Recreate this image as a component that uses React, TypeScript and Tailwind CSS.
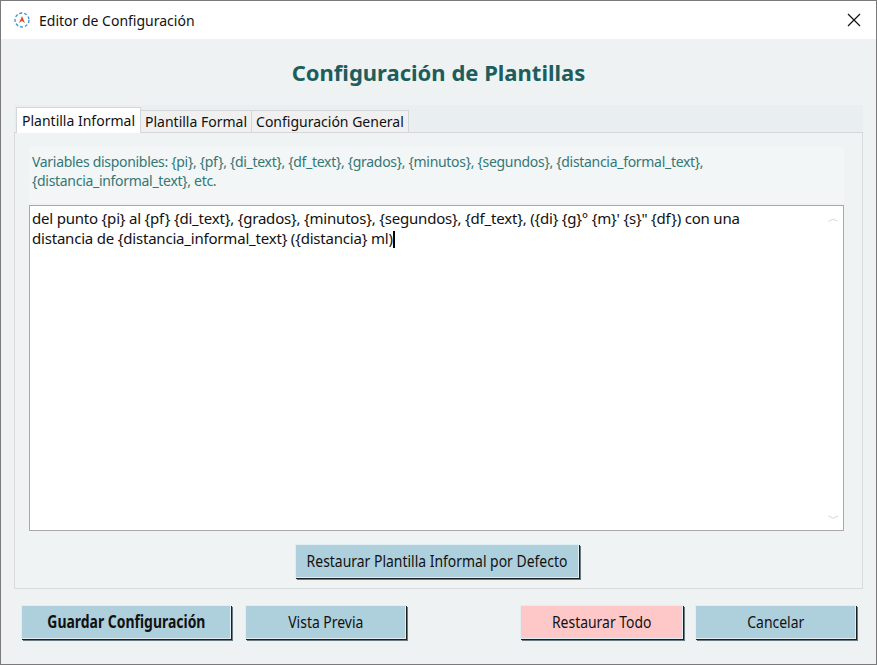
import React from "react";

const btn = "h-[34px] bg-[#aecfdc] border border-[#e0eef3] shadow-[1px_1px_0_#1f1f1f,2px_2px_0_#6b7b80] text-[#111] text-[17px] font-['Liberation_Sans',Arial,sans-serif] flex items-center justify-center whitespace-nowrap";
const narrow = "inline-block scale-x-[0.82]";

export default function App() {
  return (
    <div className="w-[877px] h-[665px] border border-[#7a7a7a] bg-[#eef2f3] flex flex-col font-['Liberation_Sans',Arial,sans-serif] overflow-hidden">
      <div className="h-[38px] bg-white flex items-center shrink-0">
        <svg width="20" height="20" viewBox="0 0 20 20" className="ml-[11px] mr-[7px]">
          <circle cx="10" cy="10" r="7" fill="none" stroke="#3a8fd0" strokeWidth="1.3" strokeDasharray="3 2" />
          <path d="M10 6 L13 13 L10 11 L7 13 Z" fill="#d9532c" />
        </svg>
        <span className="text-[14px] text-[#111] font-['Noto_Sans',sans-serif]">Editor de Configuración</span>
        <svg width="14" height="14" viewBox="0 0 14 14" className="ml-auto mr-[15px]">
          <path d="M1 1 L13 13 M13 1 L1 13" stroke="#111" strokeWidth="1.2" />
        </svg>
      </div>
      <div className="h-[66px] flex items-center justify-center shrink-0">
        <h1 className="text-[22px] font-bold text-[#1d5d5c] mt-[1px] font-['Liberation_Sans',Arial,sans-serif]">Configuración de Plantillas</h1>
      </div>
      <div className="mx-[13px] bg-[#e9eef0] flex flex-col h-[484px]">
        <div className="flex items-end h-[28px] pl-[2px] text-[14px] text-[#111] font-['Noto_Sans',sans-serif] border-b border-[#d3d7d9]">
          <div className="h-[26px] px-[5px] bg-white border border-b-0 border-[#d3d7d9] flex items-center -mb-px">Plantilla Informal</div>
          <div className="h-[22px] px-[4px] bg-[#f0f0f0] border border-b-0 border-l-0 border-[#d3d7d9] flex items-center">Plantilla Formal</div>
          <div className="h-[22px] px-[4px] bg-[#f0f0f0] border border-b-0 border-l-0 border-[#d3d7d9] flex items-center">Configuración General</div>
        </div>
        <div className="flex-1 bg-[#eff3f4] border border-t-0 border-[#d8dcdd] pl-[14px] pr-[18px] pt-[14px] flex flex-col">
          <div className="bg-[#f2f6f7] h-[56px] pl-[3px] pt-[5px] text-[14px] leading-[19px] text-[#347775] tracking-[-0.3px]">
            Variables disponibles: {"{pi}, {pf}, {di_text}, {df_text}, {grados}, {minutos}, {segundos}, {distancia_formal_text},"}<br />
            {"{distancia_informal_text}, etc."}
          </div>
          <div className="mt-[2px] h-[326px] bg-white border border-[#a9a9a9] flex">
            <div className="flex-1 px-[2px] pt-[2px] text-[15px] leading-[20px] text-[#111] tracking-[-0.2px]">
              {"del punto {pi} al {pf} {di_text}, {grados}, {minutos}, {segundos}, {df_text}, ({di} {g}° {m}' {s}\" {df}) con una"}<br />
              {"distancia de {distancia_informal_text} ({distancia} ml)"}<span className="inline-block w-[2px] h-[17px] bg-black align-middle" />
            </div>
            <div className="w-[19px] flex flex-col justify-between items-center py-[4px] text-[#c0c0c0] text-[11px]">
              <span>︿</span><span>﹀</span>
            </div>
          </div>
          <div className="flex justify-center mt-[13px]">
            <div className={btn + " w-[284px] h-[32px] text-[16px]"}><span className={narrow}>Restaurar Plantilla Informal por Defecto</span></div>
          </div>
        </div>
      </div>
      <div className="flex px-[20px] mt-[16px]">
        <div className={btn + " w-[211px] font-bold"}><span className={narrow}>Guardar Configuración</span></div>
        <div className={btn + " w-[162px] ml-[14px]"}><span className={narrow}>Vista Previa</span></div>
        <div className={btn + " w-[163px] ml-[114px] !bg-[#ffc8c8]"}><span className={narrow}>Restaurar Todo</span></div>
        <div className={btn + " w-[162px] ml-[12px]"}><span className={narrow}>Cancelar</span></div>
      </div>
    </div>
  );
}
